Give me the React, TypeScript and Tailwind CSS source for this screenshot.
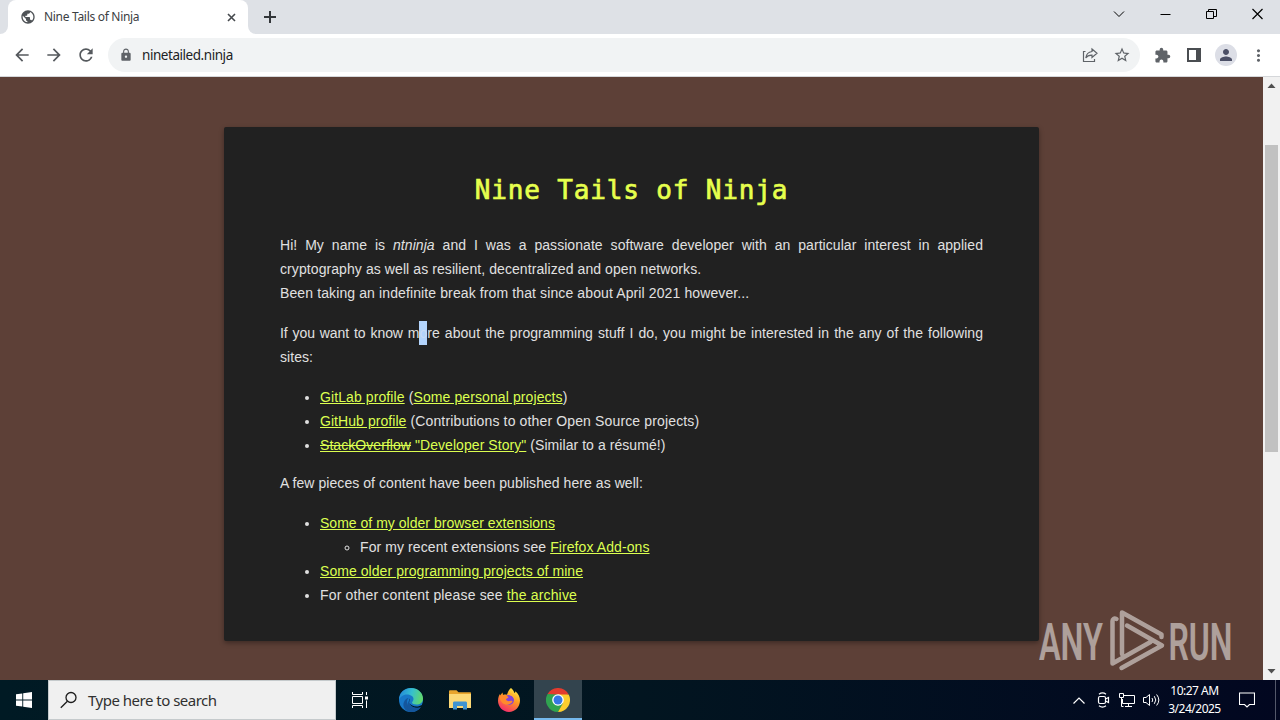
import type { ReactNode } from 'react'
import {
  MdArrowBack,
  MdArrowForward,
  MdClose,
  MdExtension,
  MdLock,
  MdMoreVert,
  MdPerson,
  MdPublic,
  MdRefresh,
  MdStarBorder,
} from 'react-icons/md'

const UI_FONT = "font-['Noto_Sans',sans-serif]"

function TabStrip() {
  return (
    <div className="flex h-[34px] bg-[#dee1e6]">
      <div className="flex w-2 bg-white">
        <div className="w-2 rounded-br-lg bg-[#dee1e6]" />
      </div>
      <div className="w-60 rounded-t-lg bg-white flex items-center pl-3">
        <MdPublic className="size-4 shrink-0 text-[#4f5357]" />
        <span className="ml-2 w-[180px] text-[12px] tracking-[-0.3px] whitespace-nowrap text-[#3c4043]">Nine Tails of Ninja</span>
        <svg className="ml-[3px] size-[9px] shrink-0" viewBox="0 0 9 9">
          <path d="M1 1l7 7M8 1l-7 7" stroke="#45494d" strokeWidth="1.6" />
        </svg>
      </div>
      <div className="flex w-2 bg-white">
        <div className="w-2 rounded-bl-lg bg-[#dee1e6]" />
      </div>
      <svg className="ml-2 mt-[11px] size-3" viewBox="0 0 12 12">
        <path d="M6 0v12M0 6h12" stroke="#33363a" strokeWidth="2" />
      </svg>
      <div className="ml-auto flex h-7 items-center pr-[17px] text-black">
        <svg className="mr-[35px] h-3 w-3" viewBox="0 0 12 12" fill="none" stroke="currentColor">
          <path d="M1 3.5l5 5 5-5" />
        </svg>
        <svg className="mr-[35px] h-3 w-[11px]" viewBox="0 0 11 12" fill="none" stroke="currentColor">
          <path d="M0.5 6.5h10" />
        </svg>
        <svg className="mr-[35px] h-3 w-[11px]" viewBox="0 0 11 12" fill="none" stroke="currentColor">
          <path d="M0.5 3.5h7v7h-7zM2.5 3.5v-2h8v7h-3" />
        </svg>
        <svg className="h-3 w-[11px]" viewBox="0 0 11 12" fill="none" stroke="currentColor" strokeWidth="1.2">
          <path d="M0.5 1l10 10M10.5 1l-10 10" />
        </svg>
      </div>
    </div>
  )
}

function Toolbar() {
  return (
    <div className="flex h-[43px] items-center border-b border-[#d5d7da] bg-white pl-3 text-[#5f6368]">
      <MdArrowBack className="size-5 shrink-0 text-[#55595d]" />
      <MdArrowForward className="ml-3 size-5 shrink-0 text-[#55595d]" />
      <MdRefresh className="ml-3 size-5 shrink-0 text-[#55595d]" />
      <div className="ml-3 flex h-[34px] w-[1032px] items-center rounded-full bg-[#f1f3f4] pl-[11px]">
        <MdLock className="size-[14px] text-[#5f6368]" />
        <span className="ml-[9px] text-[13.5px] tracking-[-0.45px] text-[#202124]">ninetailed.ninja</span>
        <svg className="ml-auto mr-[15px] h-4 w-4" viewBox="0 0 16 16" fill="none" stroke="currentColor" strokeWidth="1.2">
          <path d="M3.500 4.500H1.500v10h11V12M10 2l5 4.300-5 4.200V8.200C7 8.100 5 9 3.800 11c.4-3.600 2.500-6 6.200-6.500z" />
        </svg>
        <MdStarBorder className="mr-[9px] size-[18px]" />
      </div>
      <MdExtension className="ml-[14px] size-[17px] shrink-0" />
      <svg className="ml-[16px] h-[14px] w-[14px] shrink-0" viewBox="0 0 14 14">
        <path d="M1 1h12v12H1z" fill="none" stroke="#4a4d51" strokeWidth="2" />
        <path d="M9 1h4v12H9z" fill="#4a4d51" />
      </svg>
      <div className="ml-[14px] flex size-[22px] shrink-0 items-center justify-center rounded-full bg-[#dcdee6]">
        <MdPerson className="size-[18px] text-[#4b4f66]" />
      </div>
      <MdMoreVert className="ml-3 size-[19px] shrink-0" />
    </div>
  )
}

function Link({ children }: { children: ReactNode }) {
  return <a className="text-[#dcff50] underline underline-offset-1">{children}</a>
}

function Page() {
  return (
    <div className="flex flex-1 min-w-0 justify-center bg-[#5d4037] pt-[50px]">
      <main className="h-[514px] w-[815px] rounded-[2px] bg-[#212121] px-14 pt-9 font-['Liberation_Sans',Arial,sans-serif] text-[14px] leading-6 tracking-[0.06px] text-[#e0e0e0] shadow-[0_2px_5px_rgba(0,0,0,0.35)]">
        <h1 className="mb-4 h-[54px] text-center font-['DejaVu_Sans_Mono',monospace] text-[26px] leading-[54px] tracking-[0.85px] whitespace-nowrap text-[#e6ff4d] [-webkit-text-stroke:0.7px_#e6ff4d]">
          Nine Tails of Ninja
        </h1>
        <p className="mb-4 text-justify">
          Hi! My name is <em>ntninja</em> and I was a passionate software developer with an particular interest in applied{' '}
          <span className="tracking-[0.085px]">cryptography as well as resilient, decentralized and open networks.</span>
          <br />
          <span className="tracking-[0.115px]">Been taking an indefinite break from that since about April 2021 however...</span>
        </p>
        <p className="mb-4 text-justify">
          <span className="tracking-[-0.06px]">If you want to know m</span>
          <span className="bg-[#b3d4fc] py-1 text-[#c8dcf5]">o</span>
          re about the programming stuff I do, you might be interested in the any of the following
          sites:
        </p>
        <ul className="mb-[14px] list-disc pl-10">
          <li className="tracking-[0.1px]">
            <Link>GitLab profile</Link> (<Link>Some personal projects</Link>)
          </li>
          <li>
            <Link>GitHub profile</Link>
            <span className="tracking-[0.14px]"> (Contributions to other Open Source projects)</span>
          </li>
          <li>
            <Link><s>StackOverflow</s> "Developer Story"</Link> (Similar to a résumé!)
          </li>
        </ul>
        <p className="mb-4">A few pieces of content have been published here as well:</p>
        <ul className="list-disc pl-10">
          <li>
            <span className="tracking-[0.02px]"><Link>Some of my older browser extensions</Link></span>
            <ul className="list-[circle] pl-10">
              <li className="tracking-[0.09px]">
                For my recent extensions see <Link>Firefox Add-ons</Link>
              </li>
            </ul>
          </li>
          <li>
            <Link>Some older programming projects of mine</Link>
          </li>
          <li className="tracking-[0.16px]">
            For other content please see <Link>the archive</Link>
          </li>
        </ul>
      </main>
    </div>
  )
}

function Scrollbar() {
  return (
    <div className="flex w-[17px] flex-col items-center bg-[#f1f1f1]">
      <svg className="h-[17px] w-[17px]" viewBox="0 0 17 17">
        <path d="M4.5 11l4-4.5 4 4.5z" fill="#505050" />
      </svg>
      <div className="mt-[51px] h-[307px] w-[13px] bg-[#c1c1c1]" />
      <svg className="mt-auto h-[17px] w-[17px]" viewBox="0 0 17 17">
        <path d="M4.5 6l4 4.5 4-4.5z" fill="#505050" />
      </svg>
    </div>
  )
}

function Watermark() {
  return (
    <svg className="absolute left-[1034px] top-[604px] h-[72px] w-[202px] overflow-visible opacity-50" viewBox="0 0 202 72" fill="#fff">
      <g fontFamily="Roboto, sans-serif" fontSize="51" fontWeight="600">
        <text x="5" y="55.500" textLength="64" lengthAdjust="spacingAndGlyphs">ANY</text>
        <text x="134.500" y="55.500" textLength="64" lengthAdjust="spacingAndGlyphs">RUN</text>
      </g>
      <path
        d="M88 50V8.500L127.500 30.500V33M93 21.500l35 20L87.500 64M82.500 15c-2.500-1-4 0-4 2v42.500L116.500 38"
        fill="none"
        stroke="#fff"
        strokeWidth="4.500"
        strokeLinejoin="round"
        strokeLinecap="round"
      />
    </svg>
  )
}

function EdgeIcon() {
  return (
    <svg className="size-6" viewBox="0 0 24 24">
      <defs>
        <linearGradient id="edge-top" x1="0" y1="0.3" x2="1" y2="0.5">
          <stop offset="0" stopColor="#2387d8" />
          <stop offset="0.5" stopColor="#35bfd0" />
          <stop offset="1" stopColor="#62d96a" />
        </linearGradient>
      </defs>
      <circle cx="12" cy="12" r="12" fill="#1878c8" />
      <path d="M0 12C0 4 6 0 12 0c7 0 12 5 12 10.500 0 4-3 6-6.500 6-3 0-4.500-1-4.500-2 0-.8 1.500-1.400 1.500-3.500C14.500 8 11 6.500 8 6.500 4 6.500.8 9 0 12z" fill="url(#edge-top)" />
      <path d="M9.500 10C7 12 7 20 15 21.500c3 .5 5.500-.8 7-2.500-2.500 3.500-6 5-10 5-6 0-9-6-7-10 1-2.500 3-4 4.500-4z" fill="#14569c" />
      <path d="M11 10.500c-2.500 2.500 0 8 6.500 8 2 0 4-.7 5.500-1.500L24 15v4l-2 .5c-7 2.500-14-2.500-11-9z" fill="#021822" />
      <path d="M10.500 12c-2 4.500 4 9.500 11.500 7-2.500 3.500-6 5-10 5-4-3-5-8-1.500-12z" fill="#14569c" />
    </svg>
  )
}

function ExplorerIcon() {
  return (
    <svg className="h-5 w-[22px]" viewBox="0 0 22 20">
      <path d="M0 1.500C0 .7.500.2 1.200.2h6.300l2 2H21c.6 0 1 .4 1 1V7H0z" fill="#e8a52c" />
      <path d="M0 4h22v14H0z" fill="#fcd976" />
      <path d="M4 19.500V13c0-1 .6-1.500 1.500-1.500h11c.9 0 1.500.5 1.500 1.500v6.500h-4V16H8v3.500z" fill="#3f94d1" />
    </svg>
  )
}

function FirefoxIcon() {
  return (
    <svg className="size-6" viewBox="0 0 24 24">
      <defs>
        <linearGradient id="fox-body" x1="0.8" y1="0" x2="0.3" y2="1">
          <stop offset="0" stopColor="#fff04a" />
          <stop offset="0.45" stopColor="#ff9a22" />
          <stop offset="1" stopColor="#f5286e" />
        </linearGradient>
      </defs>
      <path d="M14 0c2 1.500 3 3.300 3.400 5 .8-.3 1-1.200 1-1.800 3 2.300 4.600 5.800 4.600 9.300C23 19 18 24 12 24S1 19 1 12.800c0-3.500 1.200-5.500 2-6.800l.5 1.500C4 6 5 5 5.500 4.500L6 7c1-.5 2.500-.6 4-.2C10.500 4.500 12 1.500 14 0z" fill="url(#fox-body)" />
      <circle cx="12" cy="12" r="5" fill="#8343d8" />
      <path d="M3 8c3-1.500 6.500-.5 8.500 1 0 1-2.500 1.500-2.500 2.500s2 2 4 1.500c1.500-.4 2.500 0 2.500.5-2 4-8 4-10.500 1S2.500 10 3 8z" fill="#ff8a2c" />
      <path d="M11 7c3 0 6.500 2 6.500 6 1-3 0-7-4.500-8z" fill="#ffb52e" />
    </svg>
  )
}

function ChromeIcon() {
  return (
    <svg className="size-6" viewBox="0 0 24 24">
      <path d="M12 12L1.600 6A12 12 0 0 1 22.400 6z" fill="#e33b2e" />
      <path d="M12 12L1.600 6A12 12 0 0 0 12 24l5.200-9z" fill="#30a350" />
      <path d="M12 6.500h10.700A12 12 0 0 1 12 24l5-9z" fill="#fccd2d" />
      <path d="M1.600 6L6.800 15 12 12V6.500z" fill="#30a350" />
      <circle cx="12" cy="12" r="5.800" fill="#fff" />
      <circle cx="12" cy="12" r="4.500" fill="#3577e5" />
    </svg>
  )
}

function Tray() {
  return (
    <div className="ml-auto flex items-center text-white">
      <svg className="h-[7px] w-3" viewBox="0 0 12 7" fill="none" stroke="currentColor" strokeWidth="1.200">
        <path d="M0.500 6.500L6 1l5.500 5.500" />
      </svg>
      <svg className="ml-[12px] h-4 w-[13px]" viewBox="0 0 13 16" fill="none" stroke="currentColor" strokeWidth="1.200">
        <rect x="1.500" y="4.500" width="7" height="7" rx="1.500" />
        <path d="M8.500 7l3-1.500v5L8.500 9M2 2.200Q5.500-.5 9 2.200M2 13.800q3.500 2.700 7 0" />
      </svg>
      <svg className="ml-[9px] h-[14px] w-4" viewBox="0 0 16 14" fill="none" stroke="currentColor">
        <path d="M5 2.500h10.500v8H3.500V6M6 13.500h7M9.500 10.500v3M.5.500h4v4h-4zM2.500 4.500v9h2" />
      </svg>
      <svg className="ml-[8px] h-[14px] w-[17px]" viewBox="0 0 17 14" fill="none" stroke="currentColor">
        <path d="M.5 4.500h2.500l3.500-3v11l-3.500-3H.5zM9 5q1.500 2 0 4M11.300 3.200q3 3.800 0 7.600M13.600 1.500q4.500 5.500 0 11" />
      </svg>
      <div className={`${UI_FONT} ml-[7px] w-[55px] text-center text-[12px] leading-[18px] tracking-[-0.5px] whitespace-nowrap`}>
        <div>10:27 AM</div>
        <div>3/24/2025</div>
      </div>
      <svg className="ml-[17px] h-4 w-4" viewBox="0 0 16 16" fill="none" stroke="currentColor" strokeWidth="1.100">
        <path d="M.5 1h15v11.500h-5L8 15l-2.500-2.500h-5z" />
      </svg>
      <div className="ml-5 mr-[4px] h-10 w-px bg-[#53586a]" />
    </div>
  )
}

function Taskbar() {
  return (
    <div className="flex h-10 bg-linear-to-r from-[#001a24] via-[#021520] to-[#020720]">
      <div className="flex w-12 items-center justify-center">
        <svg className="size-4" viewBox="0 0 16 16" fill="#fff">
          <path d="M0 2.300l6.300-.9v6.100H0zM7.200 1.300L16 0v7.500H7.200zM0 8.400h6.300v6.100L0 13.700zM7.200 8.400H16V16l-8.800-1.300z" />
        </svg>
      </div>
      <div className="flex w-72 items-center border border-[#c5cacc] bg-[#f0f0f0] pl-[11px]">
        <svg className="size-[18px]" viewBox="0 0 18 18" fill="none" stroke="#1c1c1c" strokeWidth="1.300">
          <circle cx="11" cy="6.500" r="5" />
          <path d="M7.400 10.200L.8 16.800" />
        </svg>
        <span className="ml-[10px] text-[15px] tracking-[-0.5px] whitespace-nowrap text-[#303030]">Type here to search</span>
      </div>
      <div className="flex w-12 items-center justify-center">
        <svg className="size-4" viewBox="0 0 16 16" fill="none" stroke="#fff">
          <path d="M.5 0v2.500h10V0M.5 16v-2.500h10V16M.5 4.500h10v7H.5zM14.500 0v3M14.500 8.500V16" />
          <path d="M13 4.500h3v3h-3z" fill="#fff" stroke="none" />
        </svg>
      </div>
      <div className="flex w-[54px] items-center justify-center"><EdgeIcon /></div>
      <div className="flex w-[44px] items-center justify-center"><ExplorerIcon /></div>
      <div className="flex w-[53px] items-center justify-center"><FirefoxIcon /></div>
      <div className="-ml-px flex w-12 items-center justify-center border-b-2 border-[#76b9ed] bg-[#33444e] pt-0.5"><ChromeIcon /></div>
      <Tray />
    </div>
  )
}

export default function App() {
  return (
    <div className={`${UI_FONT} relative flex h-[720px] w-[1280px] flex-col overflow-hidden`}>
      <TabStrip />
      <Toolbar />
      <div className="flex min-h-0 flex-1">
        <Page />
        <Scrollbar />
      </div>
      <Taskbar />
      <Watermark />
    </div>
  )
}
